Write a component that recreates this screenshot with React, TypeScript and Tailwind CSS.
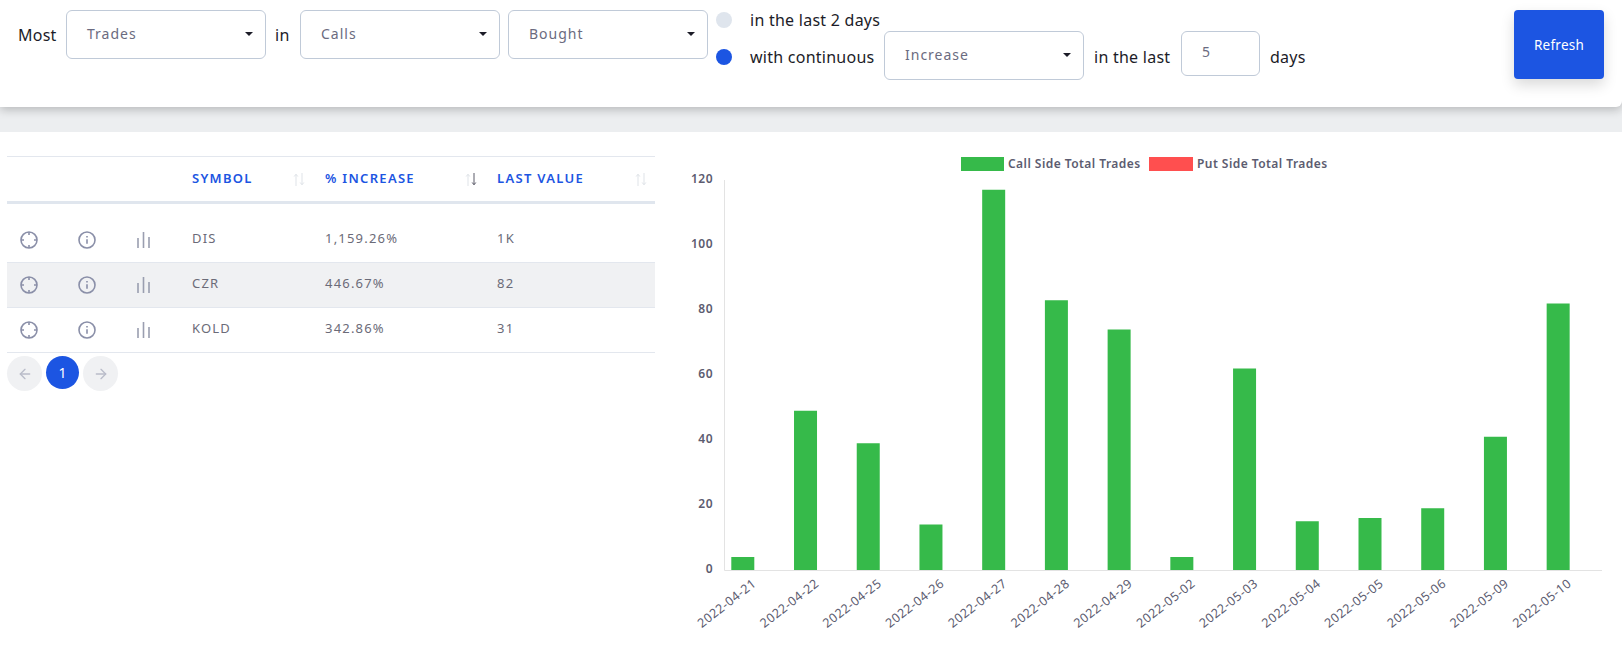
import { ArrowLeft, ArrowRight } from "lucide-react";

const font = "font-['Noto_Sans','Open_Sans',sans-serif]";

const rows = [
  { symbol: "DIS", increase: "1,159.26%", last: "1K" },
  { symbol: "CZR", increase: "446.67%", last: "82" },
  { symbol: "KOLD", increase: "342.86%", last: "31" },
];

const bars = [
  { date: "2022-04-21", value: 4 },
  { date: "2022-04-22", value: 49 },
  { date: "2022-04-25", value: 39 },
  { date: "2022-04-26", value: 14 },
  { date: "2022-04-27", value: 117 },
  { date: "2022-04-28", value: 83 },
  { date: "2022-04-29", value: 74 },
  { date: "2022-05-02", value: 4 },
  { date: "2022-05-03", value: 62 },
  { date: "2022-05-04", value: 15 },
  { date: "2022-05-05", value: 16 },
  { date: "2022-05-06", value: 19 },
  { date: "2022-05-09", value: 41 },
  { date: "2022-05-10", value: 82 },
];

const Select = ({ label, width }: { label: string; width: string }) => (
  <div className={`${width} flex h-[49px] shrink-0 items-start justify-between rounded-md border border-[#c0cad8] bg-white pl-[20px] pr-[12px] pt-[13px]`}>
    <span className="text-[14px] leading-[20px] tracking-[1px] text-[#6b6b80]">{label}</span>
    <span className="mt-[8px] h-0 w-0 border-x-[4px] border-t-[4px] border-x-transparent border-t-[#1c1c28]" />
  </div>
);

const TargetIcon = () => (
  <svg width="18" height="18" viewBox="0 0 18 18" fill="none" stroke="#8a8fa8" strokeWidth="1.6">
    <circle cx="9" cy="9" r="8" />
    <path d="M9 1v3M9 14v3M1 9h3M14 9h3" />
  </svg>
);

const InfoIcon = () => (
  <svg width="18" height="18" viewBox="0 0 18 18" fill="none" stroke="#8a8fa8" strokeWidth="1.6">
    <circle cx="9" cy="9" r="8" />
    <path d="M9 8.2v4.6" />
    <path d="M9 5v1.4" />
  </svg>
);

const BarsIcon = () => (
  <svg width="13" height="16" viewBox="0 0 13 16" fill="none" stroke="#9a9eb0" strokeWidth="1.6">
    <path d="M1 16V6M6.5 16V0M12 16V5" />
  </svg>
);

const SortIcon = ({ active }: { active?: boolean }) => (
  <svg width="12" height="13" viewBox="0 0 12 13" fill="none" strokeWidth="1">
    <path d="M3 13V1.5M1.2 3.5L3 1.2l1.8 2.3" stroke="#dfe3e8" />
    <path d="M9 0v11.5M7.2 9.5L9 11.8l1.8-2.3" stroke={active ? "#5a5a68" : "#dfe3e8"} />
  </svg>
);

const HeaderCell = ({ label, width, padding, active }: { label: string; width: string; padding: string; active?: boolean }) => (
  <div className={`${width} ${padding} flex items-center justify-between text-[13px] font-semibold tracking-[1.3px] text-[#1c55e2]`}>
    <span>{label}</span>
    <SortIcon active={active} />
  </div>
);

const Chart = () => {
  const left = 68;
  const step = 62.72;
  const base = 424;
  const unit = 3.25;
  return (
    <svg width="966" height="507" viewBox="0 0 966 507" className="block">
      <rect x="305" y="11" width="43" height="14" fill="#36ba4a" />
      <text x="352" y="22" fontSize="12" fontWeight="600" letterSpacing="0.45" fill="#5c5c70">Call Side Total Trades</text>
      <rect x="493" y="11" width="44" height="14" fill="#ff4f4f" />
      <text x="541" y="22" fontSize="12" fontWeight="600" letterSpacing="0.45" fill="#5c5c70">Put Side Total Trades</text>
      {[0, 20, 40, 60, 80, 100, 120].map((t) => (
        <text key={t} x={left - 11} y={base - t * unit + 3} textAnchor="end" fontSize="12" fontWeight="600" letterSpacing="0.5" fill="#5c5c70">
          {t}
        </text>
      ))}
      <path d={`M${left + 0.5} ${base - 390}V${base + 0.5}H946`} stroke="#e3e3e3" fill="none" />
      {bars.map((b, i) => (
        <g key={b.date}>
          <rect x={left + 7.3 + i * step} y={base - b.value * unit} width={23} height={b.value * unit} fill="#36ba4a" />
          <text
            transform={`translate(${left + 33 + i * step} ${base + 15}) rotate(-38)`}
            textAnchor="end"
            fontSize="12.5"
            letterSpacing="0.5"
            fill="#5c5c70"
          >
            {b.date}
          </text>
        </g>
      ))}
    </svg>
  );
};

export default function App() {
  return (
    <div className={`${font} h-[653px] w-[1622px] overflow-hidden bg-white`}>
      <div className="h-[132px] bg-[#eceef0]">
        <div className="relative flex h-[107px] justify-between rounded-br-md bg-white pl-[18px] pr-[18px] pt-[10px] text-[16px] leading-[24px] tracking-[0.25px] text-[#1c1c28] shadow-[0_3px_10px_rgba(0,0,0,0.22)]">
          <div className="flex items-start">
            <span className="mt-[13px] w-[48px]">Most</span>
            <Select label="Trades" width="w-[200px]" />
            <span className="mt-[13px] w-[34px] pl-[9px]">in</span>
            <Select label="Calls" width="w-[200px]" />
            <div className="w-[8px]" />
            <Select label="Bought" width="w-[200px]" />
            <div className="ml-[8px] flex flex-col">
              <div className="flex h-[20px] items-center">
                <span className="h-[16px] w-[16px] rounded-full bg-[#dfe5ed]" />
                <span className="ml-[18px]">in the last 2 days</span>
              </div>
              <div className="mt-[1px] flex items-start">
                <span className="mt-[18px] h-[16px] w-[16px] rounded-full bg-[#1c55e2]" />
                <span className="ml-[18px] mt-[14px] w-[134px] whitespace-nowrap">with continuous</span>
                <Select label="Increase" width="w-[200px]" />
                <span className="mt-[14px] w-[97px] whitespace-nowrap pl-[10px]">in the last</span>
                <div className="h-[45px] w-[79px] rounded-md border border-[#c0cad8] pl-[20px] pt-[8px] text-[14px] text-[#6b6b80]">5</div>
                <span className="ml-[10px] mt-[14px]">days</span>
              </div>
            </div>
          </div>
          <button className="h-[69px] w-[90px] rounded bg-[#1c55e2] text-[13.5px] text-white shadow-[0_6px_14px_rgba(0,0,0,0.15)]">
            Refresh
          </button>
        </div>
      </div>
      <div className="flex pt-[24px]">
        <div className="ml-[7px] w-[648px]">
          <div className="flex h-[45px] items-center border-t border-[#e3e7ee]">
            <div className="w-[185px]" />
            <HeaderCell label="SYMBOL" width="w-[133px]" padding="pr-[20px]" />
            <HeaderCell label="% INCREASE" width="w-[172px]" padding="pr-[20px]" active />
            <HeaderCell label="LAST VALUE" width="w-[158px]" padding="pr-[8px]" />
          </div>
          <div className="h-[3px] bg-[#e0e6ee]" />
          <div className="h-[14px]" />
          {rows.map((r, i) => (
            <div
              key={r.symbol}
              className={`flex h-[45px] items-center border-b border-[#e3e7ee] text-[13px] tracking-[1.2px] text-[#6b6b78] ${i === 1 ? "bg-[#f0f1f3]" : ""}`}
            >
              <div className="flex w-[58px] pl-[13px]"><TargetIcon /></div>
              <div className="flex w-[58px] pl-[13px]"><InfoIcon /></div>
              <div className="flex w-[69px] pl-[14px]"><BarsIcon /></div>
              <div className="w-[133px] pb-[2px]">{r.symbol}</div>
              <div className="w-[172px] pb-[2px]">{r.increase}</div>
              <div className="pb-[2px]">{r.last}</div>
            </div>
          ))}
          <div className="mt-[3px] flex items-start gap-[4px]">
            <div className="flex h-[35px] w-[35px] items-center justify-center rounded-full bg-[#f0f1f3] text-[#b9bcc9]"><ArrowLeft size={16} /></div>
            <div className="flex h-[33px] w-[33px] items-center justify-center rounded-full bg-[#1c55e2] text-[14px] text-white">1</div>
            <div className="flex h-[35px] w-[35px] items-center justify-center rounded-full bg-[#f0f1f3] text-[#b9bcc9]"><ArrowRight size={16} /></div>
          </div>
        </div>
        <div className="ml-[1px] mt-[-10px]">
          <Chart />
        </div>
      </div>
    </div>
  );
}
